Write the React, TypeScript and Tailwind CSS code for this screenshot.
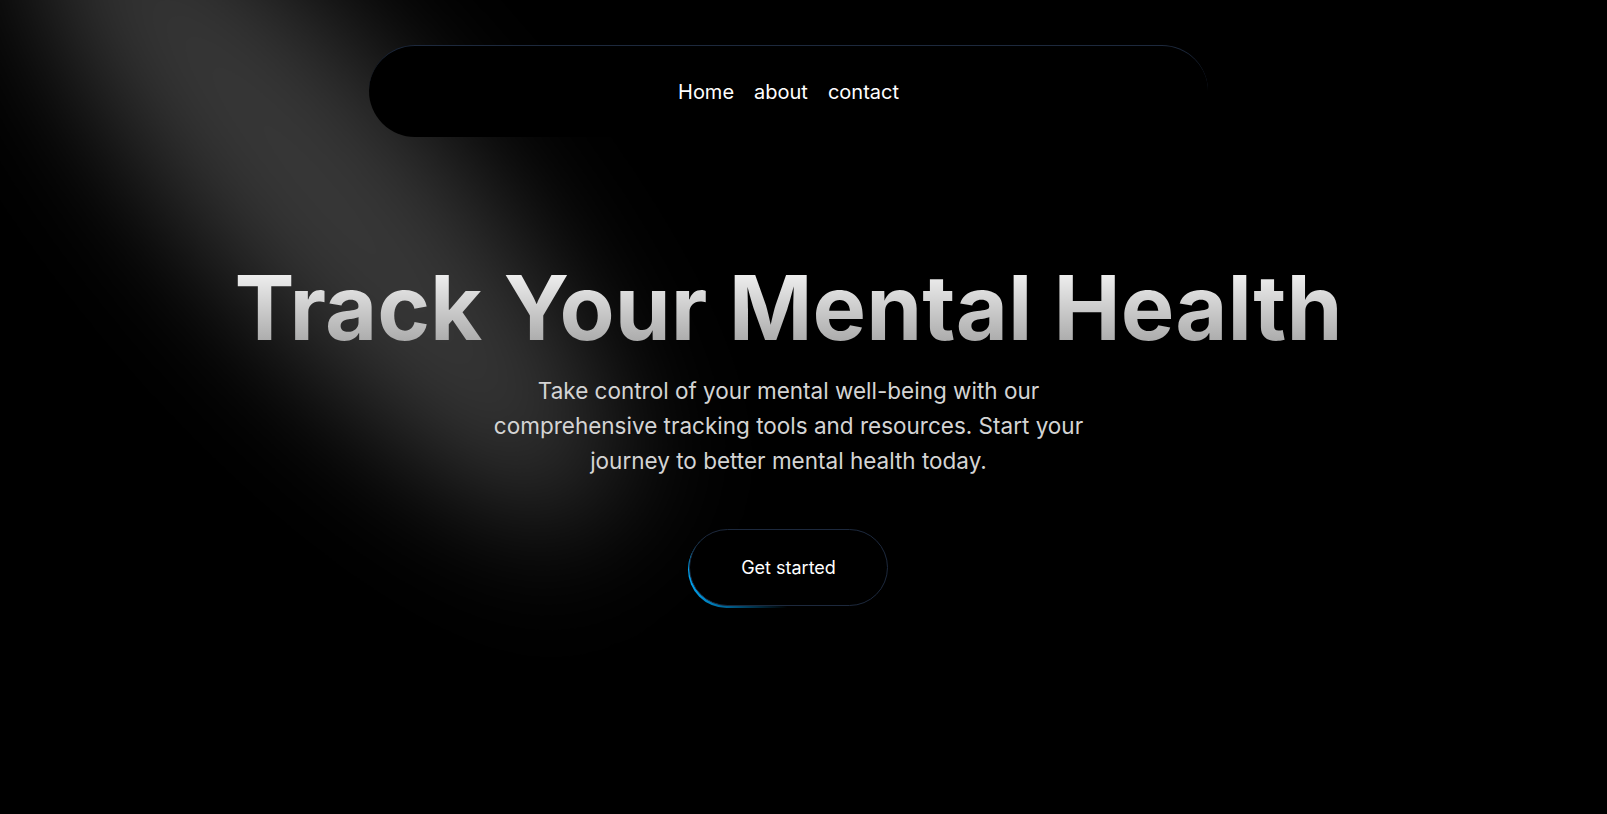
export default function App() {
  return (
    <div className="relative min-h-screen w-full overflow-hidden bg-black font-['Inter','Liberation_Sans',sans-serif] text-white">
      {/* spotlight beam */}
      <svg
        className="pointer-events-none absolute left-0 top-0 h-[814px] w-[1607px]"
        viewBox="0 0 1607 814"
      >
        <defs>
          <filter
            id="spot"
            filterUnits="userSpaceOnUse"
            x="-800"
            y="-800"
            width="3200"
            height="2400"
          >
            <feGaussianBlur stdDeviation="65" />
          </filter>
        </defs>
        <ellipse
          cx="320"
          cy="190"
          rx="430"
          ry="125"
          transform="rotate(49 320 190)"
          fill="white"
          fillOpacity="0.22"
          filter="url(#spot)"
        />
      </svg>

      <main className="relative flex flex-col items-center pr-[30px]">
        <nav className="mt-[45px] flex h-[92px] w-[839px] items-center justify-center gap-5 rounded-full border-t border-slate-800 bg-black text-xl">
          <a href="#">Home</a>
          <a href="#">about</a>
          <a href="#">contact</a>
        </nav>

        <h1 className="mt-[126px] bg-gradient-to-b from-neutral-50 to-neutral-400 bg-clip-text text-[90px] font-bold leading-none text-transparent">
          Track Your Mental Health
        </h1>

        <p className="mt-[20px] max-w-[610px] text-center text-[22.5px] leading-[35px] text-neutral-300">
          Take control of your mental well-being with our comprehensive tracking
          tools and resources. Start your journey to better mental health today.
        </p>

        <div className="relative mt-[51px]">
          <div className="absolute inset-0 -translate-x-[1px] translate-y-[2px] rounded-full bg-gradient-to-r from-sky-500 via-sky-900/40 via-40% to-transparent to-50%" />
          <button className="relative flex h-[77px] w-[199px] items-center justify-center rounded-full border border-slate-800 bg-black text-lg">
            Get started
          </button>
        </div>
      </main>
    </div>
  );
}
